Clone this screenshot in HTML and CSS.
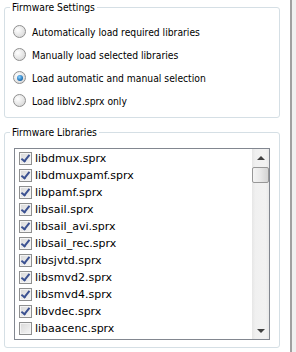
FILE: index.html
```html
<!DOCTYPE html>
<html>
<head>
    <link rel="stylesheet" href="styles.css">
</head>
<body>
    <div class="window">
        <div class="pane">
            <fieldset class="group settings">
                <legend>Firmware Settings</legend>
                <label class="radio-row"><span class="radio"></span>Automatically load required libraries</label>
                <label class="radio-row"><span class="radio"></span>Manually load selected libraries</label>
                <label class="radio-row"><span class="radio selected"></span>Load automatic and manual selection</label>
                <label class="radio-row"><span class="radio"></span>Load liblv2.sprx only</label>
            </fieldset>
            <fieldset class="group libs">
                <legend>Firmware Libraries</legend>
                <div class="listbox">
                    <ul class="items">
                        <li><span class="box checked"></span>libdmux.sprx</li>
                        <li><span class="box checked"></span>libdmuxpamf.sprx</li>
                        <li><span class="box checked"></span>libpamf.sprx</li>
                        <li><span class="box checked"></span>libsail.sprx</li>
                        <li><span class="box checked"></span>libsail_avi.sprx</li>
                        <li><span class="box checked"></span>libsail_rec.sprx</li>
                        <li><span class="box checked"></span>libsjvtd.sprx</li>
                        <li><span class="box checked"></span>libsmvd2.sprx</li>
                        <li><span class="box checked"></span>libsmvd4.sprx</li>
                        <li><span class="box checked"></span>libvdec.sprx</li>
                        <li><span class="box"></span>libaacenc.sprx</li>
                    </ul>
                    <div class="scrollbar">
                        <div class="sb-btn"><span class="arrow up"></span></div>
                        <div class="sb-track"><div class="sb-thumb"></div></div>
                        <div class="sb-btn"><span class="arrow down"></span></div>
                    </div>
                </div>
            </fieldset>
        </div>
        <div class="splitter"></div>
    </div>
</body>
</html>
```

FILE: styles.css
```css
body {
  margin: 0;
  background: #fff;
  font-family: "DejaVu Sans", sans-serif;
  font-stretch: condensed;
  font-size: 10.25px;
  color: #000;
}

.window {
  display: flex;
  height: 352px;
  overflow: hidden;
}

.pane {
  width: 290px;
}

.splitter {
  width: 4px;
  border-left: 2px solid #a0a0a0;
  background: #f0f0f0;
}

/* group boxes */
.group {
  margin: 0 0 0 4px;
  width: 276px;
  box-sizing: border-box;
  border: 1px solid #d5dfe5;
  border-radius: 3px;
  padding: 6px 0 5px 0;
}

.group legend {
  margin-left: 5px;
  padding: 0 2px;
  height: 14px;
  line-height: 14px;
}

.libs {
  margin-top: 7px;
  padding: 9px 0 7px 0;
}

/* radios */
.radio-row {
  display: flex;
  align-items: center;
  height: 23px;
  padding-left: 8px;
  gap: 6px;
}

.radio {
  width: 13px;
  height: 13px;
  box-sizing: border-box;
  border-radius: 50%;
  border: 1px solid #8f8f8f;
  background: radial-gradient(circle at 35% 35%, #ffffff, #dedede 70%, #cfcfcf);
  display: flex;
  align-items: center;
  justify-content: center;
}

.radio.selected::after {
  content: '';
  width: 6px;
  height: 6px;
  border-radius: 50%;
  background: radial-gradient(circle at 40% 35%, #8fd3ff, #2a7fc3 55%, #0b3f73);
}

/* list box */
.listbox {
  margin-left: 9px;
  width: 256px;
  height: 192px;
  box-sizing: border-box;
  border: 1px solid #828790;
  display: flex;
}

.items {
  list-style: none;
  margin: 0;
  padding: 1px 0 0 0;
  flex: 1;
  overflow: hidden;
  font-stretch: normal;
  font-size: 11px;
}

.items li {
  display: flex;
  align-items: center;
  height: 17px;
  padding-left: 4px;
  gap: 3px;
}

.box {
  width: 13px;
  height: 13px;
  box-sizing: border-box;
  border: 1px solid #8e8f8f;
  background: linear-gradient(135deg, #d8d8d8, #f6f6f6);
  box-shadow: inset 0 0 0 1px #f4f4f4;
  position: relative;
  flex: none;
}

.box.checked::after {
  content: '';
  position: absolute;
  left: 3px;
  top: 0px;
  width: 3px;
  height: 7px;
  border: solid #3b5191;
  border-width: 0 2px 2px 0;
  transform: rotate(38deg);
}

/* scrollbar */
.scrollbar {
  width: 17px;
  display: flex;
  flex-direction: column;
  background: linear-gradient(90deg, #e6e6e6, #f0f0f0 20%, #f2f2f2 80%, #e9e9e9);
}

.sb-btn {
  height: 17px;
  display: flex;
  align-items: center;
  justify-content: center;
}

.arrow {
  width: 0;
  height: 0;
  border-left: 4px solid transparent;
  border-right: 4px solid transparent;
}

.arrow.up {
  border-bottom: 4px solid #404040;
}

.arrow.down {
  border-top: 4px solid #404040;
}

.sb-track {
  flex: 1;
  padding: 1px 0 0 0;
}

.sb-thumb {
  height: 16px;
  box-sizing: border-box;
  border: 1px solid #979797;
  border-radius: 2px;
  background: linear-gradient(90deg, #f4f4f4, #e8e8e8 50%, #d4d4d4);
}
```
